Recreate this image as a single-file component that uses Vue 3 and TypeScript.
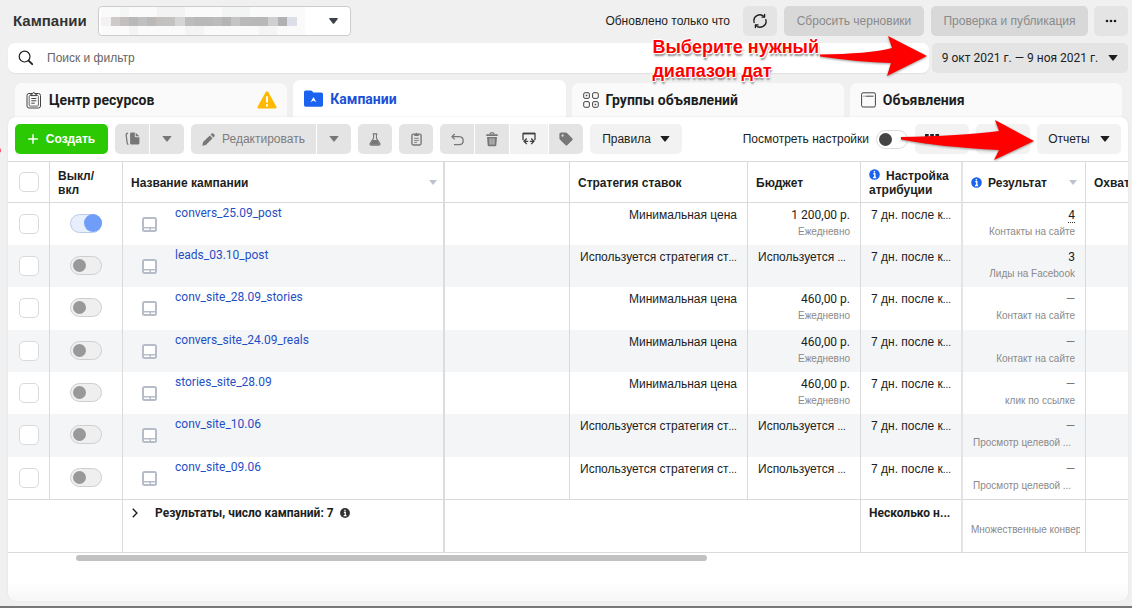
<script setup lang="ts">
import { ref } from 'vue'

interface Campaign {
  name: string
  on: boolean
  checked: boolean
  shared: boolean
  budget: string
  result: string
  resultType: string
  cut?: boolean
}

const campaigns = ref<Campaign[]>([
  { name: 'convers_25.09_post', on: true, checked: false, shared: false, budget: '1 200,00 р.', result: '4', resultType: 'Контакты на сайте' },
  { name: 'leads_03.10_post', on: false, checked: false, shared: true, budget: '', result: '3', resultType: 'Лиды на Facebook' },
  { name: 'conv_site_28.09_stories', on: false, checked: false, shared: false, budget: '460,00 р.', result: '—', resultType: 'Контакт на сайте' },
  { name: 'convers_site_24.09_reals', on: false, checked: false, shared: false, budget: '460,00 р.', result: '—', resultType: 'Контакт на сайте' },
  { name: 'stories_site_28.09', on: false, checked: false, shared: false, budget: '460,00 р.', result: '—', resultType: 'клик по ссылке' },
  { name: 'conv_site_10.06', on: false, checked: false, shared: true, budget: '', result: '—', resultType: 'Просмотр целевой ...', cut: true },
  { name: 'conv_site_09.06', on: false, checked: false, shared: true, budget: '', result: '—', resultType: 'Просмотр целевой ...', cut: true },
])

const query = ref('')
const showSettings = ref(false)
const allChecked = ref(false)

const mosaic = [
  { x: 12, w: 9, c: '#cfcaca' }, { x: 21, w: 9, c: '#c3bfbf' }, { x: 30, w: 9, c: '#b9b8b8' },
  { x: 39, w: 9, c: '#c0c0c0' }, { x: 48, w: 9, c: '#bab9ba' }, { x: 57, w: 10, c: '#c3c0bd' },
  { x: 67, w: 9, c: '#c4c2c0' }, { x: 76, w: 10, c: '#d6d5d5' }, { x: 86, w: 9, c: '#bdbdbd' },
  { x: 95, w: 19, c: '#b9b9b9' }, { x: 114, w: 9, c: '#bcbcbc' }, { x: 123, w: 9, c: '#b5b5b5' },
  { x: 132, w: 9, c: '#c4c4c4' }, { x: 141, w: 10, c: '#b9b9b9' }, { x: 151, w: 18, c: '#b8b8b8' },
  { x: 169, w: 10, c: '#cfcfcf' }, { x: 179, w: 9, c: '#b1b1b4' }, { x: 188, w: 10, c: '#dcdfe8' },
]
</script>

<template>
  <div class="page">
    <header class="topbar">
      <h1>Кампании</h1>
      <div class="account">
        <select aria-label="Рекламный аккаунт"><option></option></select>
        <svg class="mosaic" width="206" height="28" viewBox="0 0 206 28" aria-hidden="true">
          <rect x="2" width="204" height="28" fill="#fafafa" />
          <rect x="21" width="9" height="10" fill="#f4f5f5" />
          <rect x="30" y="18" width="9" height="10" fill="#f1f4f3" />
          <rect x="58" width="28" height="10" fill="#f3f3f3" />
          <rect x="86" y="18" width="19" height="10" fill="#f4f4f4" />
          <rect x="123" width="28" height="10" fill="#f3f4f4" />
          <rect x="160" y="18" width="18" height="10" fill="#f4f4f4" />
          <rect x="2" y="10" width="10" height="9" fill="#f3f1f1" />
          <rect v-for="m in mosaic" :key="m.x" :x="m.x" y="10" :width="m.w" height="9" :fill="m.c" />
        </svg>
        <svg class="caret" width="9" height="6" viewBox="0 0 9 6" aria-hidden="true"><path d="M.8 0h7.4q1 .2.5 1L5.2 5.4q-.7.8-1.4 0L.3 1Q-.2.2.8 0z" fill="#3b4148" /></svg>
      </div>
      <span class="updated">Обновлено только что</span>
      <button class="btn soft icon-btn" aria-label="Обновить">
        <svg width="16" height="16" viewBox="0 0 16 16" fill="none" stroke="#1c1e21" stroke-width="1.3" stroke-linecap="round" stroke-linejoin="round">
          <path d="M2.2 9.5A5.9 5.9 0 0 1 12.2 3.8M13.8 6.5A5.9 5.9 0 0 1 3.8 12.2" />
          <path d="M12.6 1.4v2.7H10M3.4 14.6v-2.7H6" />
        </svg>
      </button>
      <button class="btn off drafts">Сбросить черновики</button>
      <button class="btn off publish">Проверка и публикация</button>
      <button class="btn soft icon-btn" aria-label="Ещё">
        <svg width="12" height="4" viewBox="0 0 12 4" fill="#1c1e21"><circle cx="2" cy="2" r="1.3" /><circle cx="6" cy="2" r="1.3" /><circle cx="10" cy="2" r="1.3" /></svg>
      </button>
    </header>

    <div class="searchbar">
      <label class="search">
        <svg width="16" height="16" viewBox="0 0 16 16" fill="none" stroke="#1c1e21"><circle cx="6.6" cy="6.6" r="5.4" stroke-width="1.2" /><path d="M10.6 10.6l3.6 3.6" stroke-width="1.8" stroke-linecap="round" /></svg>
        <input v-model="query" type="text" placeholder="Поиск и фильтр" aria-label="Поиск и фильтр" />
      </label>
      <button class="btn soft date">
        <span>9 окт 2021 г. — 9 ноя 2021 г.</span>
        <svg width="10" height="6" viewBox="0 0 10 6"><path d="M.3 0h9.4L5.7 5.3q-.7.9-1.4 0z" fill="#1c1e21" /></svg>
      </button>
    </div>

    <nav class="tabs">
      <a href="#resources" class="tab">
        <svg width="16" height="18" viewBox="0 0 16 18" fill="none" stroke="#444" stroke-width="1">
          <rect x="1" y="2.5" width="13.5" height="14.5" rx="2" /><rect x="3.2" y="4.5" width="9.2" height="10.6" rx="1" stroke-width=".8" />
          <path d="M4.8 4.6V3.2h1.6Q7.8-.6 9.2 3.2h1.6v1.4z" fill="#fafafa" /><path d="M5.3 7.5h5M5.3 9.8h5M5.3 12.2h3.4" />
        </svg>
        <span>Центр ресурсов</span>
        <svg class="warn" width="20" height="18" viewBox="0 0 20 18"><path d="M8.6 1.3q1.4-2 2.8 0l7.8 14q.9 2-1 2.2H1.8q-2-.2-1-2.2z" fill="#ffba00" /><path d="M10 5.2v6.2M10 13.3v2.1" stroke="#fff" stroke-width="2" /></svg>
      </a>
      <a href="#campaigns" class="tab active" aria-current="page">
        <svg width="19" height="17" viewBox="0 0 19 17"><path d="M0 2Q0 .4 1.6.4h5.2q1 0 1.6.9l.8 1.1h8.2Q19 2.4 19 4v11q0 1.7-1.6 1.7H1.6Q0 16.7 0 15z" fill="#1b63ee" /><path d="M9.5 7l2.9 5.2-2.9-1.6-2.9 1.6z" fill="#fff" /></svg>
        <span>Кампании</span>
      </a>
      <a href="#adsets" class="tab">
        <svg width="16" height="16" viewBox="0 0 16 16" fill="none" stroke="#444" stroke-width="1">
          <rect x=".7" y=".7" width="5.7" height="5.7" rx="1.4" /><rect x="9.6" y=".7" width="5.7" height="5.7" rx="1.4" /><rect x=".7" y="9.6" width="5.7" height="5.7" rx="1.4" /><rect x="9.6" y="9.6" width="5.7" height="5.7" rx="1.4" />
          <path d="M2.8 3.5h1.5M11.7 12.4h1.5" stroke-width="1.5" />
        </svg>
        <span>Группы объявлений</span>
      </a>
      <a href="#ads" class="tab">
        <svg width="15" height="16" viewBox="0 0 15 16" fill="none" stroke="#444" stroke-width="1"><rect x=".6" y=".8" width="13.8" height="14.2" rx="1.4" /><path d="M2.5 4.2h1M4.5 4.2h8" /></svg>
        <span>Объявления</span>
      </a>
    </nav>

    <main class="panel">
      <div class="toolbar">
        <button class="btn create">
          <svg width="10" height="10" viewBox="0 0 10 10" stroke="#fff" stroke-width="1.4" stroke-linecap="round"><path d="M5 .7v8.6M.7 5h8.6" /></svg>
          <span>Создать</span>
        </button>
        <div class="group">
          <button class="btn grey w34" aria-label="Дублировать">
            <svg width="15" height="14" viewBox="0 0 15 14"><path d="M3 1.2Q1 1.5 1.2 3.5l1 7.500q.2 1.3 1.2 1.5" fill="none" stroke="#777" stroke-width="1.3" /><path d="M6.4.5h3.4v3.8q0 .9.9.9h3.7v6q0 1.3-1.3 1.3H6.4q-1.3 0-1.3-1.3V1.8Q5.1.5 6.4.5zM10.7.7l3.6 3.600h-3.600z" fill="#777" /></svg>
          </button>
          <button class="btn grey w34" aria-label="Варианты дублирования"><svg width="10" height="6" viewBox="0 0 10 6"><path d="M.3 0h9.4L5.7 5.3q-.7.9-1.4 0z" fill="#777" /></svg></button>
        </div>
        <div class="group">
          <button class="btn grey edit">
            <svg width="13" height="13" viewBox="0 0 13 13" fill="#777"><path d="M.3 12.7l.8-3.6 6.7-6.7 2.8 2.8-6.7 6.7zM8.6 1.6l1-1q.8-.7 1.6 0l1.2 1.2q.7.8 0 1.6l-1 1z" /></svg>
            <span>Редактировать</span>
          </button>
          <button class="btn grey w34" aria-label="Варианты редактирования"><svg width="10" height="6" viewBox="0 0 10 6"><path d="M.3 0h9.4L5.7 5.3q-.7.9-1.4 0z" fill="#777" /></svg></button>
        </div>
        <button class="btn grey w34" aria-label="A/B-тест">
          <svg width="12" height="13" viewBox="0 0 14 15" fill="none" stroke="#777" stroke-width="1.3"><path d="M4.3 1h5.4M5.3 1v5L1.3 12.3q-.6 1.4.8 1.7h9.8q1.4-.3.8-1.7L8.7 6V1" /><path d="M4.500 8h5l3.200 5.500H1.300z" fill="#777" stroke="none" /></svg>
        </button>
        <button class="btn grey w34" aria-label="Вставить">
          <svg width="11" height="14" viewBox="0 0 12 15" fill="none" stroke="#777" stroke-width="1.5"><rect x="1" y="2.2" width="10" height="11.8" rx="1.6" /><path d="M3.5 4.3V2.2h1.3Q6-.9 7.2 2.2h1.3v2.1z" fill="#777" stroke="none" /><path d="M3.5 6.7h5M3.5 9h5M3.5 11.2h3" stroke-width="1" /></svg>
        </button>
        <div class="group">
          <button class="btn grey w34" aria-label="Отменить"><svg width="13" height="13" viewBox="0 0 13 13" fill="none" stroke="#777" stroke-width="1.3" stroke-linejoin="round"><path d="M3.7 1L1 3.700l2.700 2.700M1.200 3.700h7q4 .3 4 4t-4 4H3" /></svg></button>
          <button class="btn grey w34" aria-label="Удалить"><svg width="12" height="15" viewBox="0 0 12 15" fill="none" stroke="#777"><path d="M4 2.2Q4 .8 5 .8h2q1 0 1 1.4" stroke-width="1.2" /><path d="M.3 3.2h11.4" stroke-width="1.7" /><path d="M1 5h10l-.7 8.2q-.1 1.1-1.2 1.1H2.9q-1.1 0-1.2-1.1z" fill="#777" stroke="none" /><path d="M4 6.3l.2 6.3M6 6.3v6.3M8 6.3l-.2 6.3" stroke="#e4e4e4" stroke-width=".8" /></svg></button>
          <button class="btn light swap" aria-label="Сравнить"><svg width="14" height="14" viewBox="0 0 14 14" fill="none" stroke="#3c4043" stroke-width="1.3" stroke-linejoin="round"><path d="M1.7 7.5H1V1.5h12v6h-.7" /><path d="M1 1.5h12" stroke-width="1.6" /><path d="M4.800 6.500L2 9.300l2.800 2.800M2.200 9.300h4M9.200 6.500l2.800 2.800-2.800 2.800M11.800 9.300h-4" /></svg></button>
          <button class="btn grey w34" aria-label="Теги"><svg width="14" height="14" viewBox="0 0 14 14"><path d="M2 .4h4.5q.9 0 1.5.6l5.2 5.2q1 1 0 2L8.4 13q-1 1-2 0L1 7.7Q.4 7.1.4 6.2V2Q.4.4 2 .4z" fill="#777" /><circle cx="3.6" cy="3.6" r="1.1" fill="#e4e4e4" /></svg></button>
        </div>
        <button class="btn light rules"><span>Правила</span><svg width="10" height="6" viewBox="0 0 10 6"><path d="M.3 0h9.4L5.7 5.3q-.7.9-1.4 0z" fill="#1c1e21" /></svg></button>
        <label class="view" for="view-settings">Посмотреть настройки</label>
        <input id="view-settings" v-model="showSettings" class="switch plain" type="checkbox" role="switch" />
        <button class="btn light w54" aria-label="Столбцы"><svg width="34" height="12" viewBox="0 0 34 12" fill="#1c1e21"><path d="M0 1h3.700v10H0zM5.200 1h3.700v10H5.200zM10.400 1h3.700v10h-3.700z" /></svg></button>
        <button class="btn light w54" aria-label="Разбивка"></button>
        <button class="btn light reports"><span>Отчеты</span><svg width="10" height="6" viewBox="0 0 10 6"><path d="M.3 0h9.4L5.7 5.3q-.7.9-1.4 0z" fill="#1c1e21" /></svg></button>
      </div>

      <table>
        <colgroup>
          <col class="c-check" /><col class="c-toggle" /><col class="c-name" /><col class="c-blank" /><col class="c-strategy" /><col class="c-budget" /><col class="c-attr" /><col class="c-result" /><col />
        </colgroup>
        <thead>
          <tr>
            <th class="check"><input v-model="allChecked" type="checkbox" class="box" aria-label="Выбрать все" /></th>
            <th>Выкл/<br />вкл</th>
            <th class="edge"><div class="head"><span>Название кампании</span><svg class="sort" width="8" height="5" viewBox="0 0 8 5"><path d="M0 0h8L4 5z" fill="#bcc3ce" /></svg></div></th>
            <th></th>
            <th>Стратегия ставок</th>
            <th>Бюджет</th>
            <th class="thick"><svg class="info" width="11" height="11" viewBox="0 0 11 11"><circle cx="5.5" cy="5.5" r="5.3" fill="#1b63ee" /><path d="M4.3 4.8h1.5v3.5M4 8.500h3.200M5.400 2v1.600" stroke="#fff" stroke-width="1.4" fill="none" /></svg>Настройка<br />атрибуции</th>
            <th><div class="head"><svg class="info" width="11" height="11" viewBox="0 0 11 11"><circle cx="5.5" cy="5.5" r="5.3" fill="#1b63ee" /><path d="M4.3 4.8h1.5v3.5M4 8.500h3.200M5.400 2v1.600" stroke="#fff" stroke-width="1.4" fill="none" /></svg><span>Результат</span><svg class="sort" width="8" height="5" viewBox="0 0 8 5"><path d="M0 0h8L4 5z" fill="#bcc3ce" /></svg></div></th>
            <th class="last">Охват</th>
          </tr>
        </thead>
        <tbody>
          <tr v-for="c in campaigns" :key="c.name">
            <td class="check"><input v-model="c.checked" type="checkbox" class="box" :aria-label="c.name" /></td>
            <td class="toggle"><input v-model="c.on" type="checkbox" role="switch" class="switch" :aria-label="c.name" /></td>
            <td class="edge">
              <div class="name">
                <svg width="15" height="15" viewBox="0 0 15 15"><rect width="15" height="15" rx="2.500" fill="#b7bdc8" /><path d="M2 2h11v8H2zM2 11.500h5.500V13H2zM9 11.500h4V13H9z" fill="#fff" /></svg>
                <a :href="'#' + c.name">{{ c.name }}</a>
              </div>
            </td>
            <td></td>
            <td v-if="c.shared">Используется стратегия ст<span class="dots">...</span></td>
            <td v-else class="num">Минимальная цена</td>
            <td v-if="c.shared">Используется <span class="dots">...</span></td>
            <td v-else class="num"><span class="digits">{{ c.budget }}</span><small>Ежедневно</small></td>
            <td class="thick">7 дн. после к<span class="dots">...</span></td>
            <td class="num"><span class="digits" :class="{ dotted: c.on, dash: c.result === '—' }">{{ c.result }}</span><small :class="{ cut: c.cut }">{{ c.resultType }}</small></td>
            <td class="last"></td>
          </tr>
        </tbody>
        <tfoot>
          <tr>
            <td colspan="2"></td>
            <td class="edge">
              <div class="total">
                <svg class="chev" width="6" height="10" viewBox="0 0 6 10" fill="none" stroke="#1c1e21" stroke-width="1.4"><path d="M.8.8L4.9 5 .8 9.2" /></svg>
                <span>Результаты, число кампаний: 7</span>
                <svg width="10" height="10" viewBox="0 0 11 11"><circle cx="5.5" cy="5.5" r="5.4" fill="#333" /><path d="M4.3 4.8h1.5v3.5M4 8.500h3.200M5.400 2v1.600" stroke="#fff" stroke-width="1.4" fill="none" /></svg>
              </div>
            </td>
            <td colspan="3"></td>
            <td class="thick several">Несколько н...</td>
            <td class="multi"><div>Множественные конвер</div></td>
            <td class="last"></td>
          </tr>
        </tfoot>
      </table>
      <div class="scroll"><div class="thumb"></div></div>
    </main>

    <p class="note">Выберите нужный<br />диапазон дат</p>
    <svg class="arrow to-date" width="112" height="46" viewBox="0 0 112 46" aria-hidden="true"><path d="M1 19.500Q50 19 73 13L69 1l39 20-40 20 4-13Q40 27 1 21.500z" fill="#f00" /></svg>
    <svg class="arrow to-reports" width="138" height="46" viewBox="0 0 138 46" aria-hidden="true"><path d="M1 18Q60 17 99 12L95 1l39 21-40 19 5-10Q40 28 1 20.500z" fill="#f00" /></svg>
  </div>
</template>

<style>
body {
  margin: 0;
  background: #f0f0f0;
}
</style>

<style scoped>
* {
  box-sizing: border-box;
}
.page {
  position: relative;
  display: flex;
  flex-direction: column;
  min-height: 100vh;
  padding: 6px 4px 5px 8px;
  overflow: hidden;
  background: #f0f0f0;
  border-bottom: 2px solid #777;
  color: #1c1e21;
  font: 12px/16px "Liberation Sans", Arial, sans-serif;
}
.page::before {
  content: "";
  position: absolute;
  left: -4px;
  top: 148px;
  width: 5px;
  height: 5px;
  border-radius: 50%;
  background: #ff4a5a;
}
button, input, select {
  font: inherit;
  color: inherit;
}
svg {
  flex: none;
}
.btn {
  display: flex;
  align-items: center;
  justify-content: center;
  height: 30px;
  padding: 0;
  border: 0;
  border-radius: 5px;
  white-space: nowrap;
}
.soft { background: #e4e4e4; }
.off { background: #d8d8d8; color: #8a8a8a; }
.grey { background: #e4e4e4; color: #7c7c7c; }
.light { background: #f2f2f2; }
.icon-btn, .w34 { width: 34px; }
.w54 { width: 54px; }
.digits, .name a, .date { font-family: Roboto, sans-serif; }
.dots { font-size: 10px; }

.topbar {
  display: flex;
  align-items: center;
  height: 30px;
}
h1 {
  margin: 0 11px 0 5px;
  font: bold 15px/20px "Liberation Sans", Arial, sans-serif;
  color: #333;
}
.account {
  position: relative;
  width: 253px;
  height: 30px;
}
.account select {
  width: 100%;
  height: 100%;
  appearance: none;
  border: 1px solid #ccc;
  border-radius: 4px;
  background: #fff;
}
.mosaic {
  position: absolute;
  left: 1px;
  top: 1px;
  pointer-events: none;
}
.account .caret {
  position: absolute;
  right: 13px;
  top: 12px;
  pointer-events: none;
}
.updated { margin-left: auto; margin-right: 13px; }
.drafts { width: 140px; margin: 0 7px; }
.publish { width: 157px; margin-right: 6px; }

.searchbar {
  display: flex;
  gap: 3px;
  margin-top: 7px;
}
.search {
  display: flex;
  flex: 1;
  align-items: center;
  gap: 13px;
  height: 30px;
  padding-left: 10px;
  background: #fff;
  border-radius: 7px;
  box-shadow: 0 1px 1px #e2e2e2;
}
.search input {
  flex: 1;
  padding: 0;
  border: 0;
  outline: 0;
  background: none;
}
.search input::placeholder { color: #666; opacity: 1; }
.date { width: 196px; gap: 10px; }

.tabs {
  display: grid;
  grid-template-columns: repeat(4, 1fr);
  gap: 6px;
  align-items: end;
  height: 37px;
  margin-top: 7px;
  padding: 0 6px 0 7px;
}
.tab {
  display: flex;
  align-items: center;
  gap: 7px;
  height: 34px;
  padding: 0 10px 0 11px;
  background: #fafafa;
  border-radius: 7px 7px 0 0;
  color: #1c1e21;
  font: bold 14px/18px Roboto, "Liberation Sans", sans-serif;
  text-decoration: none;
}
.tab.active {
  height: 37px;
  background: #fff;
  color: #1c4fd6;
}
.warn { margin-left: auto; }

.panel {
  display: flex;
  flex: 1;
  flex-direction: column;
  overflow: hidden;
  background: #fff linear-gradient(#fff, #f7f7f7) bottom / 100% 20px no-repeat;
  border-radius: 8px;
  box-shadow: 0 0 2px #ddd;
}
.toolbar {
  display: flex;
  align-items: center;
  gap: 7px;
  height: 45px;
  padding: 0 7px;
  border-bottom: 1px solid #dadada;
}
.group { display: flex; gap: 1px; }
.group .btn { border-radius: 0; }
.group .btn:first-child { border-radius: 5px 0 0 5px; }
.group .btn:last-child { border-radius: 0 5px 5px 0; }
.create {
  width: 93px;
  gap: 8px;
  background: #2ac904;
  color: #fff;
  font: bold 12px/16px "Liberation Sans", Arial, sans-serif;
}
.edit { width: 125px; gap: 7px; }
.swap { width: 38px; }
.rules { width: 92px; gap: 9px; }
.reports { width: 84px; gap: 10px; }
.view { margin-left: auto; }

.switch {
  display: block;
  position: relative;
  width: 32px;
  height: 19px;
  margin: 0;
  appearance: none;
  border: 1px solid #cfcfcf;
  border-radius: 10px;
  background: #efefef;
}
.switch::before {
  content: "";
  position: absolute;
  left: 2px;
  top: 2px;
  width: 13px;
  height: 13px;
  border-radius: 50%;
  background: #999;
}
.switch.plain { background: #fff; border-color: #ddd; }
.switch.plain::before { background: #444; }
.switch:checked { background: #e7effd; border-color: #bccbe8; }
.switch:checked::before { left: 13px; top: -1px; width: 18px; height: 18px; background: #6f9df8; }

table {
  width: 100%;
  table-layout: fixed;
  border-collapse: separate;
  border-spacing: 0;
}
.c-check { width: 42px; }
.c-toggle { width: 73px; }
.c-name { width: 322px; }
.c-blank { width: 125px; }
.c-strategy { width: 178px; }
.c-budget { width: 113px; }
.c-attr { width: 102px; }
.c-result { width: 123px; }
th {
  height: 41px;
  padding: 1px 8px 0;
  border-right: 1px solid #dadada;
  border-bottom: 1px solid #dadada;
  font-weight: bold;
  line-height: 14px;
  text-align: left;
  white-space: nowrap;
}
td {
  height: 42px;
  padding: 4px 10px 0;
  border-right: 1px solid #dadada;
  overflow: hidden;
  vertical-align: top;
  white-space: nowrap;
}
.check, .toggle { padding: 11px 0 0 11px; }
.toggle { padding-left: 20px; }
th.check { padding: 0 0 0 11px; }
.last { padding-right: 0; border-right: 0; overflow: hidden; }
.edge { border-right: 2px solid #dcdcdc; }
.thick { border-right: 2px solid #e4e4e4; }
tbody tr:nth-child(even) { background: #f4f5f7; }
tbody tr:nth-child(3n) td { height: 43px; }
.box {
  display: block;
  width: 20px;
  height: 20px;
  margin: 0;
  appearance: none;
  border: 1px solid #dadada;
  border-radius: 5px;
  background: #fff;
}
.box:checked { background: #1b63ee; }
.head { display: flex; align-items: center; }
.head .sort { margin-left: auto; }
th.edge { padding-right: 6px; }
.info { margin-right: 6px; }
td.edge { padding: 2px 0 0 19px; }
.name { display: flex; gap: 18px; }
.name svg { margin-top: 12px; }
.name a { color: #1f4fc4; text-decoration: none; }
.num { text-align: right; }
small {
  display: block;
  padding-top: 1px;
  color: #8a8a8a;
  font-size: 10px;
}
small.cut { text-align: left; }
.dotted { border-bottom: 1px dotted #333; }
.dash { color: #777; }
tfoot td {
  height: 54px;
  border-top: 1px solid #dadada;
  border-bottom: 1px solid #dadada;
  font-family: Roboto, "Liberation Sans", sans-serif;
  font-weight: bold;
}
tfoot td.edge { padding: 5px 0 0 9px; }
.total { display: flex; align-items: center; gap: 6px; }
.chev { margin-right: 11px; }
tfoot .several { padding: 5px 8px 0; }
tfoot .multi {
  padding: 22px 5px 0 8px;
  color: #8a8a8a;
  font: 10px/16px "Liberation Sans", Arial, sans-serif;
}
.multi div { overflow: hidden; }
.scroll { padding: 2px 0 0 68px; }
.thumb {
  width: 60%;
  height: 6px;
  border-radius: 3px;
  background: #c1c1c1;
}

.note {
  position: absolute;
  right: 313px;
  top: 35px;
  margin: 0;
  color: #f00;
  font: bold 18px/24px "Liberation Sans", Arial, sans-serif;
  text-shadow: 1px 0 #fff, -1px 0 #fff, 0 1px #fff, 0 -1px #fff, 1px 1px #fff, -1px -1px #fff, 1px 3px 2px #888;
}
.arrow {
  position: absolute;
  filter: drop-shadow(0 1px 1px #999);
}
.to-date { right: 201px; top: 35px; }
.to-reports { right: 94px; top: 119px; }
</style>
